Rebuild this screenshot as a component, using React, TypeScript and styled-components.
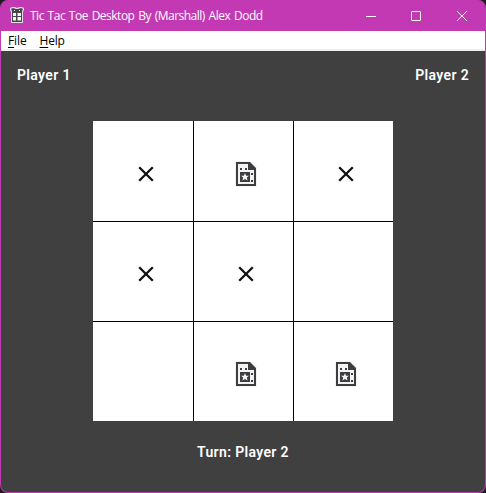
import React from "react";
import styled, { createGlobalStyle } from "styled-components";

const PageStyle = createGlobalStyle`
  * { box-sizing: border-box; }
  body { margin: 0; background: #1c1c1e; overflow: hidden; }
`;

const Window = styled.div`
  width: 486px;
  height: 493px;
  display: flex;
  flex-direction: column;
  background: #404040;
  border: 1px solid #c239b3;
  border-top: 0;
  border-radius: 8px;
  overflow: hidden;
`;

const TitleBar = styled.header`
  height: 31px;
  flex: none;
  display: flex;
  align-items: center;
  padding-left: 8px;
  background: #c239b3;
  color: #fff;
`;

const Title = styled.span`
  flex: 1;
  margin-left: 5px;
  font: 12px/16px "Open Sans", sans-serif;
  letter-spacing: -0.5px;
  word-spacing: 1.1px;
  white-space: nowrap;
`;

const CaptionButton = styled.button<{ $width: number }>`
  width: ${(p) => p.$width}px;
  height: 31px;
  padding: 0;
  border: 0;
  background: transparent;
  color: #fff;
  display: flex;
  align-items: center;
  justify-content: center;
`;

const MenuBar = styled.nav`
  height: 20px;
  flex: none;
  display: flex;
  gap: 13px;
  padding-left: 7px;
  background: #fff;
  border-bottom: 2px solid #f0f0f0;
`;

const MenuItem = styled.span<{ $spacing: number }>`
  font: 12px/20px "Open Sans", sans-serif;
  letter-spacing: ${(p) => p.$spacing}px;
  color: #000;
`;

const Accel = styled.span`
  text-decoration: underline;
  text-underline-offset: 2px;
  text-decoration-thickness: 1px;
`;

const Game = styled.main`
  flex: 1;
  display: flex;
  flex-direction: column;
  align-items: center;
`;

const Players = styled.div`
  width: 100%;
  height: 70px;
  flex: none;
  display: flex;
  justify-content: space-between;
  padding: 16px 16px 0;
`;

const Label = styled.span`
  font: 600 14px/17px Roboto, "Liberation Sans", sans-serif;
  letter-spacing: 0.35px;
  color: #fff;
`;

const Board = styled.div`
  display: grid;
  grid-template-columns: 100px 99px 99px;
  grid-template-rows: 100px 99px 99px;
  gap: 1px;
  background: #000;
`;

const Cell = styled.div`
  display: flex;
  align-items: center;
  justify-content: center;
  background: #fff;
`;

const Mark = styled.div<{ $first: boolean; $top: boolean }>`
  display: flex;
  padding-left: ${(p) => (p.$first ? 6 : 5)}px;
  padding-top: ${(p) => (p.$top ? 6 : 5)}px;
`;

const Turn = styled.div`
  display: flex;
  margin-top: 23px;
`;

const GiftIcon = () => (
  <svg width="16" height="18" viewBox="0 0 16 18">
    <path d="M1 3V1l2-1h3l2 1 2-1h3l2 1v2l-1 2v11H2V5Z" fill="#e2dde2" />
    <path d="M2 2l2-1 3 1h2l3-1 2 1-1 2v11H3V4Z" fill="#48464a" />
    <path d="M4 6h3v3H4ZM8.5 6H12v3H8.500ZM4 10h3v3.500H4ZM8.500 10H12v3.500H8.500ZM5 3h1v1H5ZM10 3h1v1h-1Z" fill="#f5f5f5" />
  </svg>
);

const Cross = () => (
  <svg width="16" height="16" viewBox="0 0 16 16">
    <path d="M1.2 1.2 14.8 14.8M14.8 1.2 1.2 14.8" stroke="#111" strokeWidth="2.3" />
  </svg>
);

const GameFile = () => (
  <svg width="22" height="26" viewBox="0 0 22 26">
    <path d="M1 0h15l6 6v19l-1 1H1l-1-1V1Z" fill="#f3f3f3" />
    <path fillRule="evenodd" d="M1 1h14l6 6v18H1ZM3 3v20h16V9h-6V3Z" fill="#3d3d3f" />
    <path d="M5 7h2v2H5ZM10 7h2v2h-2ZM5 11h10v10H5ZM16 12h2v2h-2ZM16 19h2v2h-2Z" fill="#3d3d3f" />
    <path d="m10 12 1.1 2.7H14l-2.2 1.9.8 2.9L10 17.9l-2.6 1.6.8-2.9L6 14.7h2.9Z" fill="#f3f3f3" />
  </svg>
);

const cells = ["x", "o", "x", "x", "x", "", "", "o", "o"];

export default function App() {
  return (
    <>
      <PageStyle />
      <Window>
        <TitleBar>
          <GiftIcon />
          <Title>Tic Tac Toe Desktop By (Marshall) Alex Dodd</Title>
          <CaptionButton $width={45} aria-label="Minimize">
            <svg width="10" height="10"><path d="M0 5.5h10" stroke="currentColor" /></svg>
          </CaptionButton>
          <CaptionButton $width={46} aria-label="Maximize">
            <svg width="10" height="10"><rect x=".5" y=".5" width="9" height="9" rx=".5" fill="none" stroke="currentColor" /></svg>
          </CaptionButton>
          <CaptionButton $width={46} aria-label="Close">
            <svg width="10" height="10"><path d="m0 0 10 10M10 0 0 10" stroke="currentColor" /></svg>
          </CaptionButton>
        </TitleBar>
        <MenuBar>
          <MenuItem $spacing={-0.1}><Accel>F</Accel>ile</MenuItem>
          <MenuItem $spacing={-0.25}><Accel>H</Accel>elp</MenuItem>
        </MenuBar>
        <Game>
          <Players>
            <Label>Player 1</Label>
            <Label>Player 2</Label>
          </Players>
          <Board>
            {cells.map((c, i) => (
              <Cell key={i}>
                {c && (
                  <Mark $first={i % 3 === 0} $top={i < 3}>
                    {c === "x" ? <Cross /> : <GameFile />}
                  </Mark>
                )}
              </Cell>
            ))}
          </Board>
          <Turn><Label>Turn: Player 2</Label></Turn>
        </Game>
      </Window>
    </>
  );
}
